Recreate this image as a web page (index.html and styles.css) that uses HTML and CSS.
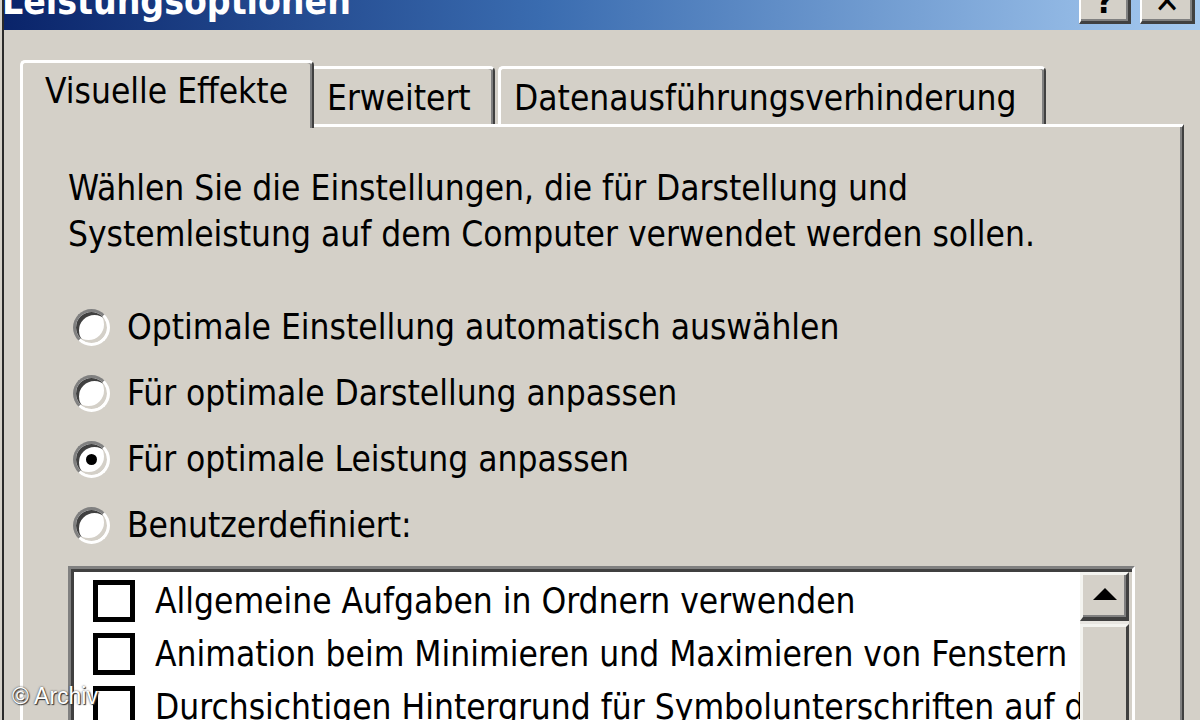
FILE: index.html
```html
<!DOCTYPE html>
<html lang="de">
<head>
<meta charset="utf-8">
<title>Leistungsoptionen</title>
<link rel="stylesheet" href="styles.css">
</head>
<body>
<div class="window">
  <div class="titlebar">
    <span class="title">Leistungsoptionen</span>
    <div class="caption-buttons">
      <div class="cbtn help">?</div>
      <div class="cbtn close">✕</div>
    </div>
  </div>
  <div class="client">
    <div class="tabs">
      <div class="tab active">Visuelle Effekte</div>
      <div class="tab t2">Erweitert</div>
      <div class="tab t3">Datenausführungsverhinderung</div>
    </div>
    <div class="panel">
      <p class="intro">Wählen Sie die Einstellungen, die für Darstellung und<br>Systemleistung auf dem Computer verwendet werden sollen.</p>
      <div class="radios">
        <div class="radio"><span class="rb"></span><span>Optimale Einstellung automatisch auswählen</span></div>
        <div class="radio"><span class="rb"></span><span>Für optimale Darstellung anpassen</span></div>
        <div class="radio"><span class="rb checked"></span><span>Für optimale Leistung anpassen</span></div>
        <div class="radio"><span class="rb"></span><span>Benutzerdefiniert:</span></div>
      </div>
      <div class="listbox">
        <div class="items">
          <div class="item"><span class="cb"></span><span>Allgemeine Aufgaben in Ordnern verwenden</span></div>
          <div class="item"><span class="cb"></span><span>Animation beim Minimieren und Maximieren von Fenstern</span></div>
          <div class="item"><span class="cb"></span><span>Durchsichtigen Hintergrund für Symbolunterschriften auf dem Desktop</span></div>
        </div>
        <div class="scrollbar">
          <div class="sbtn"><svg width="26" height="14" viewBox="0 0 26 14"><path d="M13 1 L25 13 L1 13 Z" fill="#000"/></svg></div>
          <div class="thumb"></div>
        </div>
      </div>
    </div>
  </div>
</div>
<div class="watermark">© Archiv</div>
</body>
</html>
```

FILE: styles.css
```css
html, body {
  margin: 0;
  padding: 0;
}
body {
  width: 1200px;
  height: 720px;
  overflow: hidden;
  background: #d4d0c8;
  font-family: "DejaVu Sans Condensed", "DejaVu Sans", sans-serif;
  color: #000;
  position: relative;
}
.window {
  height: 720px;
  margin-left: 2px;
  border-left: 2px solid #2a2a2a;
  display: flex;
  flex-direction: column;
}
.titlebar {
  height: 30px;
  flex: none;
  display: flex;
  justify-content: space-between;
  align-items: flex-start;
  background: linear-gradient(to right, #0a246a 0%, #3a6cb0 45%, #a6caf0 100%);
  overflow: hidden;
}
.title {
  color: #fff;
  font-weight: bold;
  font-size: 37px;
  line-height: 37px;
  margin-top: -17px;
  margin-left: -2px;
  white-space: nowrap;
}
.caption-buttons {
  display: flex;
  gap: 9px;
  margin-right: 5px;
  margin-top: -21px;
}
.cbtn {
  width: 47px;
  height: 40px;
  background: #d4d0c8;
  border-top: 2px solid #fff;
  border-left: 2px solid #fff;
  border-right: 3px solid #404040;
  border-bottom: 3px solid #404040;
  box-shadow: inset -2px -2px 0 #808080;
  display: flex;
  align-items: center;
  justify-content: center;
  font-weight: bold;
  font-size: 34px;
  line-height: 1;
}
.close {
  width: 50px;
}
.client {
  flex: 1;
  padding: 30px 16px 0 16px;
  display: flex;
  flex-direction: column;
}
.tabs {
  display: flex;
  align-items: flex-end;
  position: relative;
  z-index: 1;
}
.tab {
  box-sizing: border-box;
  height: 58px;
  background: #d4d0c8;
  border-top: 3px solid #fff;
  border-left: 3px solid #fff;
  border-right: 2px solid #404040;
  box-shadow: inset -2px 0 0 #808080;
  border-radius: 5px 5px 0 0;
  font-size: 35px;
  line-height: 46px;
  padding-top: 6px;
  white-space: nowrap;
  overflow: hidden;
}
.tab.active {
  width: 294px;
  height: 68px;
  margin-bottom: -4px;
  padding-top: 5px;
  padding-left: 22px;
}
.tab.t2 {
  width: 181px;
  border-left: none;
  border-radius: 0 5px 0 0;
  padding-left: 13px;
}
.tab.t3 {
  width: 548px;
  margin-left: 3px;
  padding-left: 13px;
}
.panel {
  flex: 1;
  background: #d4d0c8;
  border-top: 3px solid #fff;
  border-left: 3px solid #fff;
  border-right: 2px solid #404040;
  box-shadow: inset -2px 0 0 #808080;
  padding: 38px 47px 0 45px;
  font-size: 35px;
  line-height: 46px;
}
.intro {
  margin: 0;
  white-space: nowrap;
}
.radios {
  margin-top: 37px;
  display: flex;
  flex-direction: column;
}
.radio {
  height: 66px;
  display: flex;
  align-items: center;
  gap: 17px;
  white-space: nowrap;
}
.rb {
  box-sizing: border-box;
  width: 37px;
  height: 37px;
  margin-left: 5px;
  border-radius: 50%;
  border: 3px solid;
  border-color: #808080 #fff #fff #808080;
  background: #fff;
  box-shadow: inset 3px 3px 0 #404040, inset -3px -3px 0 #d4d0c8;
  position: relative;
  flex: none;
}
.rb.checked::after {
  content: "";
  position: absolute;
  left: 50%;
  top: 50%;
  width: 11px;
  height: 11px;
  margin: -5.5px 0 0 -5.5px;
  border-radius: 50%;
  background: #000;
}
.listbox {
  margin-top: 8px;
  height: 200px;
  display: flex;
  background: #fff;
  border-top: 3px solid #808080;
  border-left: 3px solid #808080;
  border-right: 3px solid #fff;
  border-bottom: 3px solid #fff;
  box-shadow: inset 3px 3px 0 #404040, inset -3px -3px 0 #d4d0c8;
  padding: 3px 3px 0 3px;
}
.items {
  flex: 1;
  overflow: hidden;
  padding-top: 2px;
}
.item {
  height: 53px;
  display: flex;
  align-items: center;
  gap: 20px;
  padding-left: 19px;
  white-space: nowrap;
}
.cb {
  box-sizing: border-box;
  width: 42px;
  height: 42px;
  border: 5px solid #000;
  background: #fff;
  flex: none;
}
.scrollbar {
  width: 49px;
  flex: none;
  display: flex;
  flex-direction: column;
  background: #e8e6e1;
}
.sbtn {
  box-sizing: border-box;
  height: 49px;
  background: #d4d0c8;
  border-top: 3px solid #f4f4f0;
  border-left: 3px solid #f4f4f0;
  border-right: 3px solid #404040;
  border-bottom: 4px solid #404040;
  box-shadow: inset -2px -2px 0 #808080;
  display: flex;
  align-items: center;
  justify-content: center;
  padding-bottom: 4px;
}
.thumb {
  flex: 1;
  margin-top: 3px;
  background: #d4d0c8;
  border-top: 3px solid #f4f4f0;
  border-left: 3px solid #f4f4f0;
  border-right: 3px solid #404040;
}
.watermark {
  position: absolute;
  left: 12px;
  bottom: 10px;
  font-family: "Liberation Sans", Arial, sans-serif;
  font-size: 23px;
  color: #fff;
  text-shadow: 0 0 2px #333, 1px 1px 1px #333;
}
```
